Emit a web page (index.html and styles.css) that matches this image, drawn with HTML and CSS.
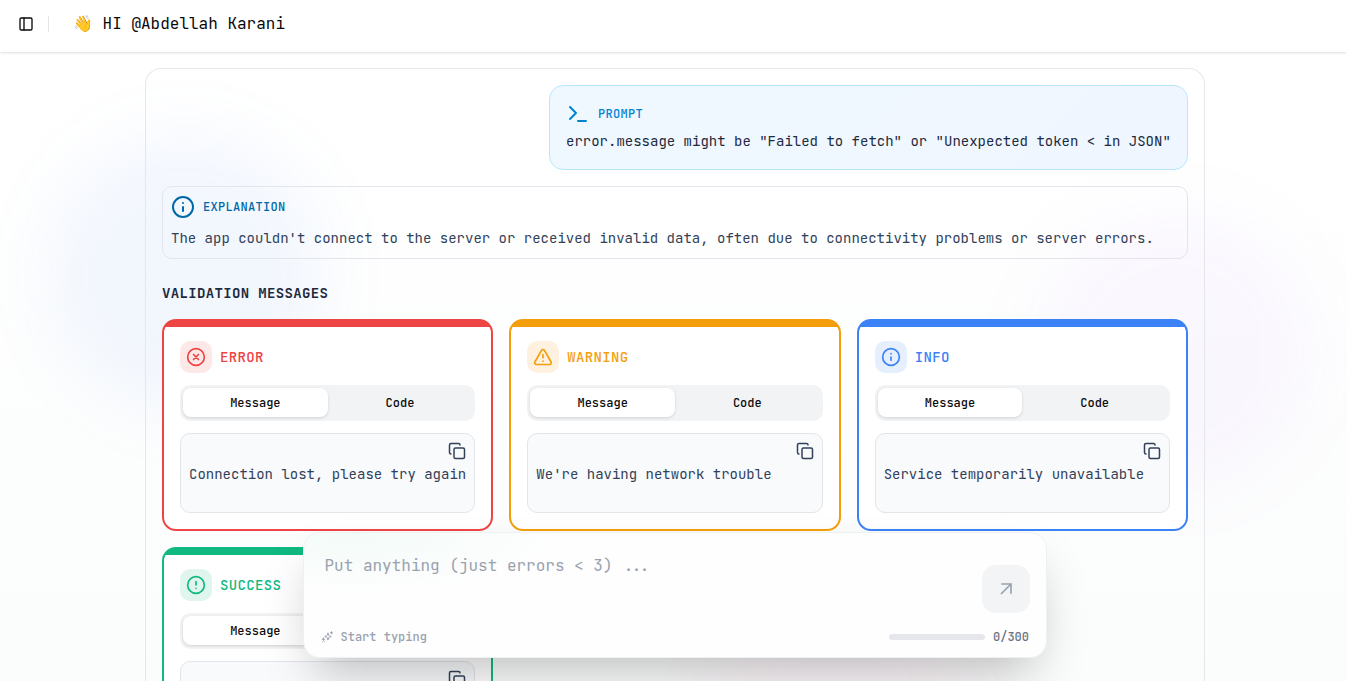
FILE: index.html
```html
<!DOCTYPE html>
<html lang="en">
<head>
<meta charset="utf-8">
<title>Error messages</title>
<link rel="stylesheet" href="styles.css">
</head>
<body>
<svg width="0" height="0" class="defs">
  <symbol id="info" viewBox="0 0 24 24"><circle cx="12" cy="12" r="10"/><path d="M12 16v-4M12 8h.01"/></symbol>
  <symbol id="copy" viewBox="0 0 24 24"><rect x="8" y="8" width="14" height="14" rx="2"/><path d="M4 16c-1.1 0-2-.9-2-2V4c0-1.1.9-2 2-2h10c1.1 0 2 .9 2 2"/></symbol>
</svg>
<div class="decor"><i class="blob blue"></i><i class="blob purple"></i><i class="blob pink"></i></div>
<header class="topbar">
  <svg class="icon panel-icon" viewBox="0 0 24 24"><rect x="3" y="3" width="18" height="18" rx="2"/><path d="M9 3v18"/></svg>
  <span class="divider"></span>
  <span class="greeting">👋 HI @Abdellah Karani</span>
</header>
<main class="panel">
  <section class="prompt">
    <div class="label"><svg class="icon i24" viewBox="0 0 24 24"><path d="M4 17l6-6-6-6M12 19h8"/></svg><span>PROMPT</span></div>
    <p>error.message might be "Failed to fetch" or "Unexpected token &lt; in JSON"</p>
  </section>
  <section class="explanation">
    <div class="label"><svg class="icon i24"><use href="#info"/></svg><span>EXPLANATION</span></div>
    <p>The app couldn't connect to the server or received invalid data, often due to connectivity problems or server errors.</p>
  </section>
  <h2>VALIDATION MESSAGES</h2>
  <div class="grid">
    <article class="card error">
      <div class="title"><span class="badge"><svg class="icon i20" viewBox="0 0 24 24"><circle cx="12" cy="12" r="10"/><path d="M15 9l-6 6M9 9l6 6"/></svg></span><b>ERROR</b></div>
      <div class="tabs"><span class="active">Message</span><span>Code</span></div>
      <div class="message"><span>Connection lost, please try again</span><svg class="icon copy"><use href="#copy"/></svg></div>
    </article>
    <article class="card warning">
      <div class="title"><span class="badge"><svg class="icon i20" viewBox="0 0 24 24"><path d="M21.73 18l-8-14a2 2 0 0 0-3.48 0l-8 14A2 2 0 0 0 4 21h16a2 2 0 0 0 1.73-3M12 9v4M12 17h.01"/></svg></span><b>WARNING</b></div>
      <div class="tabs"><span class="active">Message</span><span>Code</span></div>
      <div class="message"><span>We're having network trouble</span><svg class="icon copy"><use href="#copy"/></svg></div>
    </article>
    <article class="card info">
      <div class="title"><span class="badge"><svg class="icon i20"><use href="#info"/></svg></span><b>INFO</b></div>
      <div class="tabs"><span class="active">Message</span><span>Code</span></div>
      <div class="message"><span>Service temporarily unavailable</span><svg class="icon copy"><use href="#copy"/></svg></div>
    </article>
    <article class="card success">
      <div class="title"><span class="badge"><svg class="icon i20" viewBox="0 0 24 24"><circle cx="12" cy="12" r="10"/><path d="M12 8v4M12 16h.01"/></svg></span><b>SUCCESS</b></div>
      <div class="tabs"><span class="active">Message</span><span></span></div>
      <div class="message"><span></span><svg class="icon copy"><use href="#copy"/></svg></div>
    </article>
  </div>
</main>
<form class="composer">
  <div class="entry">
    <span class="placeholder">Put anything (just errors &lt; 3) ...</span>
    <span class="send"><svg class="icon i16 arrow" viewBox="0 0 24 24"><path d="M5 4.500h14.500V19M19.500 4.500L4.500 19.500"/></svg></span>
  </div>
  <div class="status">
    <svg class="icon sparkle" viewBox="0 0 24 24"><path d="M14 4.500l1.200 3.600a2.500 2.500 0 0 0 1.600 1.600l3.700 1.300-3.700 1.300a2.500 2.500 0 0 0-1.600 1.600L14 18l-1.300-4.100a2.500 2.500 0 0 0-1.600-1.600L7.500 11l3.600-1.300a2.500 2.500 0 0 0 1.600-1.600zM5 14v5M2.500 16.500h5M21 1.500v4M19 3.500h4M7 21.500h.01M3 22h.01"/></svg>
    <span class="hint">Start typing</span>
    <span class="meter"></span>
    <span class="count">0/300</span>
  </div>
</form>
</body>
</html>
```
FILE: styles.css
```css
* { box-sizing: border-box; }
html { height: 100%; overflow: hidden; }
body {
  margin: 0;
  height: 681px;
  overflow: hidden;
  background: linear-gradient(#fff 0%, #fff 20%, #fbfcfc 100%);
  font-family: "JetBrains Mono", "DejaVu Sans Mono", "Liberation Mono", monospace;
  color: #0a0a0a;
}
p, h2 { margin: 0; }
.defs { position: absolute; }
.icon {
  display: block;
  flex: none;
  fill: none;
  stroke: currentColor;
  stroke-width: 2;
  stroke-linecap: round;
  stroke-linejoin: round;
}
.i24 { width: 24px; height: 24px; }
.i20 { width: 20px; height: 20px; }
.i16 { width: 16px; height: 16px; }

.decor { position: absolute; inset: 0; overflow: hidden; z-index: -1; }
.blob { position: absolute; border-radius: 50%; filter: blur(32px); }
.blue { left: 45px; top: 132px; width: 280px; height: 280px; background: rgba(59, 130, 246, .064); }
.purple { left: 1035px; top: 210px; width: 280px; height: 280px; background: rgba(168, 85, 247, .042); }
.pink { left: 700px; top: 600px; width: 280px; height: 280px; background: rgba(236, 72, 153, .045); }

.topbar {
  display: flex;
  align-items: center;
  height: 52px;
  padding: 0 18px 4px;
  background: #fff;
  box-shadow: 0 1px 3px rgba(0, 0, 0, .1), 0 1px 2px -1px rgba(0, 0, 0, .1);
}
.panel-icon { width: 16px; height: 16px; }
.divider { width: 1px; height: 16px; margin: 0 24px 0 14px; background: #e5e5e5; }
.greeting { padding-bottom: 1px; font-size: 16px; line-height: 24px; white-space: nowrap; }

.panel {
  display: flex;
  flex-direction: column;
  width: 1060px;
  height: 613px;
  overflow: hidden;
  margin: 16px 0 0 145px;
  padding: 16px 16px 0;
  border: 1px solid #e5e7eb;
  border-bottom: 0;
  border-radius: 16px 16px 0 0;
}
.label { display: flex; align-items: center; gap: 8px; font-size: 12px; font-weight: 550; letter-spacing: .3px; }
.panel p { font-size: 14px; line-height: 22.75px; white-space: nowrap; }
.prompt {
  flex: none;
  align-self: flex-end;
  width: 639px;
  height: 84.75px;
  padding: 16px;
  border: 1px solid #b8e6fe;
  border-radius: 14px;
  background: linear-gradient(135deg, #f0f8ff, #eff6ff);
  color: #1d293d;
}
.prompt .label { margin-bottom: 4px; color: #0084d1; }
.explanation { flex: none; margin-top: 16px; padding: 8px; border: 1px solid #e2e5eb; border-radius: 10px; color: #314158; }
.explanation .label { margin-bottom: 8px; color: #0069a8; }
h2 { margin: 24px 0 16px; font-size: 14px; line-height: 20.500px; font-weight: 600; letter-spacing: .35px; color: #1d293d; }

.grid { display: grid; flex: none; grid-template-columns: repeat(3, minmax(0, 1fr)); gap: 16px; }
.card {
  height: 212px;
  padding: 20px 16px 16px;
  border: 2px solid var(--tone);
  border-radius: 14px;
  background: linear-gradient(var(--tone) 6px, #fff 6px);
}
.error { --tone: #ef4444; --soft: #fde8e8; }
.warning { --tone: #f59e0b; --soft: #fef1df; }
.info { --tone: #3b82f6; --soft: #e5effe; }
.success { --tone: #10b981; --soft: #e0f5ee; }
.title { display: flex; align-items: center; gap: 8px; color: var(--tone); font-size: 14px; letter-spacing: .35px; }
.title b { font-weight: 550; }
.badge { display: grid; place-items: center; width: 32px; height: 32px; border-radius: 10px; background: var(--soft); }
.tabs { display: flex; height: 36px; margin: 12px 0; padding: 3px; border-radius: 10px; background: #f2f3f5; }
.tabs span { display: grid; flex: 1; height: 29px; place-items: center; border-radius: 8px; font-size: 12px; font-weight: 500; }
.tabs .active { background: #fff; box-shadow: 0 1px 3px rgba(0, 0, 0, .14); }
.message {
  position: relative;
  display: flex;
  align-items: center;
  height: 80px;
  padding: 2px 8px 0;
  border: 1px solid #e2e5ea;
  border-radius: 10px;
  background: #f9fafc;
  color: #314158;
  font-size: 14px;
  white-space: nowrap;
}
.copy { position: absolute; top: 8px; right: 8px; width: 18px; height: 18px; }

.composer {
  position: absolute;
  left: 303px;
  top: 532px;
  width: 744px;
  height: 126px;
  padding: 16px;
  border: 1px solid #edf1f1;
  border-radius: 17px;
  background: radial-gradient(ellipse 210px 62px at 50px 0, #f3fbf8, #fefefe);
  box-shadow: 0 25px 50px -12px rgba(0, 0, 0, .25);
}
.entry { display: flex; justify-content: space-between; height: 64px; padding: 5px 0 0 4.500px; }
.placeholder { font-size: 16px; line-height: 24px; color: #99a1af; }
.send { display: grid; place-items: center; align-self: flex-end; width: 48px; height: 48px; border-radius: 14px; background: #f3f4f6; color: #99a1af; }
.arrow { stroke-width: 2.500; stroke-linecap: butt; stroke-linejoin: miter; }
.status { display: flex; align-items: center; height: 16px; margin-top: 16px; padding-right: 1px; font-size: 12px; font-weight: 500; color: #99a1af; }
.sparkle { width: 12px; height: 12px; margin: 0 8px 0 .5px; }
.meter { width: 96px; height: 6px; margin-left: auto; border-radius: 3px; background: #e5e7eb; }
.count { margin-left: 8px; color: #6a7282; }
```
